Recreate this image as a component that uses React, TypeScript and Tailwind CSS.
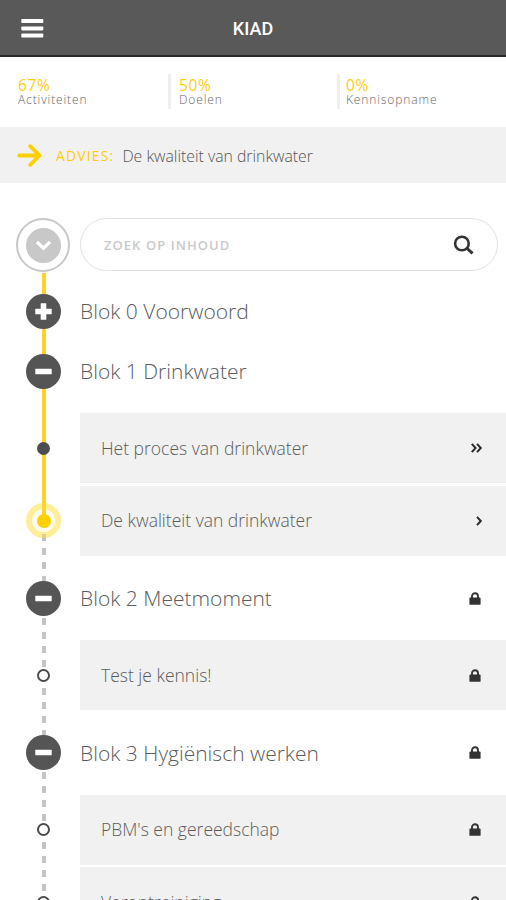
import { useState } from "react"
import clsx from "clsx"

type Status = "done" | "current" | "locked"

interface Lesson {
  name: string
  status: Status
}

interface Block {
  name: string
  open: boolean
  locked?: boolean
  lessons: Lesson[]
}

const stats = [
  { value: "67%", label: "Activiteiten", className: "w-[168px] pl-[18px]" },
  { value: "50%", label: "Doelen", className: "w-[169px] border-l-[3px] border-[#efefef] pl-2" },
  { value: "0%", label: "Kennisopname", className: "w-[169px] border-l-[3px] border-[#efefef] pl-[6px]" },
]

const initialBlocks: Block[] = [
  { name: "Blok 0 Voorwoord", open: false, lessons: [] },
  {
    name: "Blok 1 Drinkwater",
    open: true,
    lessons: [
      { name: "Het proces van drinkwater", status: "done" },
      { name: "De kwaliteit van drinkwater", status: "current" },
    ],
  },
  {
    name: "Blok 2 Meetmoment",
    open: true,
    locked: true,
    lessons: [{ name: "Test je kennis!", status: "locked" }],
  },
  {
    name: "Blok 3 Hygiënisch werken",
    open: true,
    locked: true,
    lessons: [
      { name: "PBM's en gereedschap", status: "locked" },
      { name: "Verontreiniging", status: "locked" },
    ],
  },
]

function LockIcon() {
  return (
    <svg width="12" height="13" viewBox="0 0 12 13" className="mr-[25px]">
      <path d="M3 6V4.2a3 3 0 0 1 6 0V6" fill="none" stroke="#333" strokeWidth="1.9" />
      <rect x="0.4" y="5.6" width="11.2" height="7.2" rx="0.9" fill="#333" />
    </svg>
  )
}

function LessonIcon({ status }: { status: Status }) {
  if (status === "locked") return <LockIcon />
  return (
    <svg width="13" height="12" viewBox="0 0 13 12" className="mr-[23px]" fill="none" stroke="#2b2b2b" strokeWidth="2">
      {status === "done" && <path d="M1.8 1.8 5.6 6 1.8 10.2" />}
      <path d="M7 1.8 10.8 6 7 10.2" />
    </svg>
  )
}

function LessonNode({ status }: { status: Status }) {
  if (status === "current") {
    return (
      <div className="flex size-[35px] items-center justify-center rounded-full border-[6px] border-[#ffdd33]/45 bg-[#ffe44d]/10">
        <div className="size-[14px] rounded-full bg-[#ffd000]" />
      </div>
    )
  }
  return (
    <div
      className={clsx(
        "size-[13px] rounded-full",
        status === "done" ? "bg-[#4d4d4d]" : "border-2 border-[#4a4a4a] bg-white"
      )}
    />
  )
}

export default function App() {
  const [blocks, setBlocks] = useState(initialBlocks)

  const toggle = (name: string) => {
    setBlocks(prev => prev.map(b => (b.name === name ? { ...b, open: !b.open } : b)))
  }

  return (
    <div className="h-[900px] w-[506px] overflow-hidden bg-white font-['Open_Sans',sans-serif] font-light text-[#5c5c5c]">
      <header className="flex h-[57px] items-center border-b-2 border-[#2a2a2a] bg-[#595959]">
        <button className="w-[64px] pl-[21px]">
          <svg width="23" height="19" viewBox="0 0 23 19" fill="#fff" className="mt-px">
            <rect x="0.3" y="0" width="22" height="4" rx="0.8" />
            <rect x="0.3" y="7.4" width="22" height="4" rx="0.8" />
            <rect x="0.3" y="14.6" width="22" height="4" rx="0.8" />
          </svg>
        </button>
        <h1 className="flex-1 pr-[64px] pt-px text-center font-[Roboto,sans-serif] text-[18px] font-medium text-white">
          KIAD
        </h1>
      </header>

      <div className="flex h-[70px] items-start pt-[17px]">
        {stats.map(stat => (
          <div key={stat.label} className={clsx("flex h-[35px] flex-col pt-[3px]", stat.className)}>
            <span className="text-[15.5px] font-normal leading-4 tracking-[0.6px] text-[#ffcc14]">{stat.value}</span>
            <span className="text-xs leading-[14px] tracking-[0.88px] text-[#666]">{stat.label}</span>
          </div>
        ))}
      </div>

      <div className="flex h-14 items-center bg-[#f1f1f1] pl-[17px]">
        <svg width="25" height="23" viewBox="0 0 25 23" fill="none" stroke="#ffd000" strokeWidth="3.8" strokeLinecap="round" strokeLinejoin="round">
          <path d="M2.2 11.5H22M13.2 2.2l9.3 9.3-9.3 9.3" />
        </svg>
        <span className="ml-[14px] pt-px text-[14px] font-normal tracking-[1.15px] text-[#ffcc14]">ADVIES:</span>
        <span className="ml-2 pt-[3px] text-[15.8px] text-[#555]">De kwaliteit van drinkwater</span>
      </div>

      <div className="flex h-[90px] pt-[35px]">
        <div className="flex w-20 pl-4">
          <button className="flex size-[54px] items-center justify-center rounded-full border-[2.5px] border-[#c8c8c8]">
            <span className="flex size-[35px] items-center justify-center rounded-full bg-[#c8c8c8]">
              <svg width="17" height="11" viewBox="0 0 17 11" fill="none" stroke="#fff" strokeWidth="3.2">
                <path d="M2 2l6.5 6.2L15 2" />
              </svg>
            </span>
          </button>
        </div>
        <div className="flex h-[53px] w-[418px] items-center rounded-full border border-[#e2e2e2] pl-[23px] pr-[23px]">
          <input
            placeholder="ZOEK OP INHOUD"
            className="min-w-0 flex-1 pt-[2px] text-[13px] font-semibold tracking-[1.05px] outline-none placeholder:text-[#cacaca]"
          />
          <svg width="21" height="20" viewBox="0 0 21 20" fill="none" stroke="#333" strokeWidth="2.6">
            <circle cx="8.9" cy="8.5" r="6.8" />
            <path d="M13.6 13l6 5.4" strokeWidth="3" />
          </svg>
        </div>
      </div>

      <div className="grid grid-cols-1">
        {/* progress rail, drawn behind the nodes */}
        <div className="col-start-1 row-start-1 ml-[42px] flex w-1 flex-col">
          <div className="h-[247px] bg-[#ffd12b]" />
          <div className="flex-1 bg-[repeating-linear-gradient(to_bottom,#c4c4c4_0px,#c4c4c4_7px,transparent_7px,transparent_14px)]" />
        </div>

        <div className="z-10 col-start-1 row-start-1 pt-2">
          {blocks.map(block => (
            <section key={block.name}>
              <div className="flex h-[60px] items-center">
                <div className="flex w-20 pl-[26px]">
                  <button
                    onClick={() => toggle(block.name)}
                    className="flex size-[35px] items-center justify-center rounded-full bg-[#555]"
                  >
                    <svg width="17" height="17" viewBox="0 0 17 17" fill="#fff">
                      <rect x="0.3" y="5.7" width="16.4" height="5.6" rx="0.5" />
                      {!block.open && <rect x="5.7" y="0.3" width="5.6" height="16.4" rx="0.5" />}
                    </svg>
                  </button>
                </div>
                <h2 className="flex-1 pt-[2px] text-[21px]">{block.name}</h2>
                {block.locked && <LockIcon />}
              </div>
              {block.open && (
                <div className="flex flex-col gap-[2.5px] pb-[12.5px] pt-3">
                  {block.lessons.map(lesson => (
                    <div key={lesson.name} className="flex h-[70px] items-center">
                      <div className="flex w-20 justify-center pl-[7px]">
                        <LessonNode status={lesson.status} />
                      </div>
                      <div className="flex h-full flex-1 items-center bg-[#f1f1f1] pl-[21px]">
                        <span className="flex-1 text-[17.5px]">{lesson.name}</span>
                        <LessonIcon status={lesson.status} />
                      </div>
                    </div>
                  ))}
                </div>
              )}
            </section>
          ))}
        </div>
      </div>
    </div>
  )
}
